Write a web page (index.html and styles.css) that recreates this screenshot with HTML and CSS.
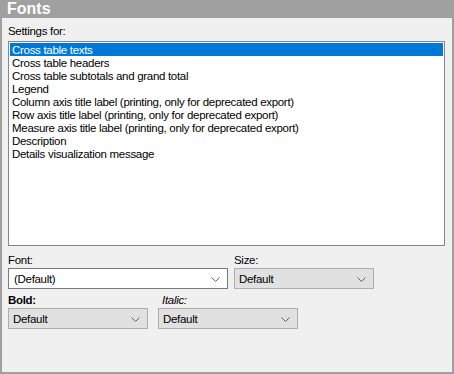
FILE: index.html
```html
<!DOCTYPE html>
<html lang="en">
<head>
  <meta charset="UTF-8" />
  <title>Fonts</title>
  <link rel="stylesheet" href="styles.css">
</head>
<body>
  <div class="panel">
    <div class="panel-title">Fonts</div>
    <div class="panel-body">
      <div class="label">Settings for:</div>
      <ul class="listbox">
        <li class="selected">Cross table texts</li>
        <li>Cross table headers</li>
        <li>Cross table subtotals and grand total</li>
        <li>Legend</li>
        <li>Column axis title label (printing, only for deprecated export)</li>
        <li>Row axis title label (printing, only for deprecated export)</li>
        <li>Measure axis title label (printing, only for deprecated export)</li>
        <li>Description</li>
        <li>Details visualization message</li>
      </ul>

      <div class="row row-first">
        <div class="field">
          <div class="label">Font:</div>
          <div class="combo combo-edit combo-font">
            <span>(Default)</span>
            <svg class="chev" width="9" height="5" viewBox="0 0 9 5"><path d="M0.5 0.5 L4.5 4.5 L8.5 0.5" fill="none" stroke="#606060" stroke-width="1"/></svg>
          </div>
        </div>
        <div class="field">
          <div class="label">Size:</div>
          <div class="combo combo-size">
            <span>Default</span>
            <svg class="chev" width="9" height="5" viewBox="0 0 9 5"><path d="M0.5 0.5 L4.5 4.5 L8.5 0.5" fill="none" stroke="#606060" stroke-width="1"/></svg>
          </div>
        </div>
      </div>

      <div class="row row-second">
        <div class="field">
          <div class="label label-bold">Bold:</div>
          <div class="combo combo-style">
            <span>Default</span>
            <svg class="chev" width="9" height="5" viewBox="0 0 9 5"><path d="M0.5 0.5 L4.5 4.5 L8.5 0.5" fill="none" stroke="#606060" stroke-width="1"/></svg>
          </div>
        </div>
        <div class="field field-italic">
          <div class="label label-italic">Italic:</div>
          <div class="combo combo-style">
            <span>Default</span>
            <svg class="chev" width="9" height="5" viewBox="0 0 9 5"><path d="M0.5 0.5 L4.5 4.5 L8.5 0.5" fill="none" stroke="#606060" stroke-width="1"/></svg>
          </div>
        </div>
      </div>
    </div>
  </div>
</body>
</html>
```

FILE: styles.css
```css
* {
  margin: 0;
  padding: 0;
  box-sizing: border-box;
}

body {
  background-color: #ffffff;
  font-family: 'Liberation Sans', Arial, sans-serif;
  font-size: 11.5px;
  letter-spacing: -0.3px;
  color: #000;
}

.panel {
  width: 454px;
  height: 374px;
  display: flex;
  flex-direction: column;
  background-color: #f0f0f0;
}

.panel-title {
  height: 18px;
  background-color: #a0a0a0;
  color: #ffffff;
  font-weight: bold;
  font-size: 16px;
  letter-spacing: 0;
  line-height: 18px;
  padding-left: 7px;
}

.panel-body {
  flex: 1;
  border: 2px solid #a0a0a0;
  border-top: none;
  padding: 5px 7px 0 6px;
}

.label {
  height: 16px;
  line-height: 17px;
  color: #000;
}

.label-bold {
  font-weight: bold;
}

.label-italic {
  font-style: italic;
  padding-left: 4px;
}

.listbox {
  list-style: none;
  margin-top: 2px;
  height: 205px;
  background: #ffffff;
  border: 1px solid #828790;
  padding: 1px;
}

.listbox li {
  height: 13px;
  line-height: 14px;
  padding-left: 2px;
  white-space: nowrap;
}

.listbox li.selected {
  background-color: #0078d7;
  color: #ffffff;
}

.row {
  display: flex;
}

.row-first {
  margin-top: 6px;
  gap: 6px;
}

.row-second {
  margin-top: 3px;
  gap: 10px;
}

.combo {
  height: 21px;
  display: flex;
  align-items: center;
  justify-content: space-between;
  padding: 0 7px 0 4px;
  background-color: #e1e1e1;
  border: 1px solid #adadad;
}

.combo-edit {
  background-color: #ffffff;
  border-color: #7a7a7a;
  padding-left: 5px;
}

.combo-font {
  width: 220px;
}

.combo-size {
  width: 140px;
}

.combo-style {
  width: 140px;
}

.chev {
  display: block;
  margin-top: 1px;
}
```
